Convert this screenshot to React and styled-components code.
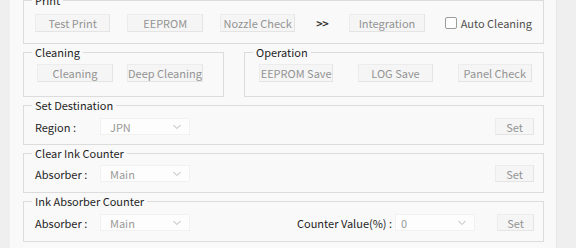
import React from 'react';
import styled, { createGlobalStyle } from 'styled-components';

const Global = createGlobalStyle`
  html, body { margin: 0; padding: 0; background: #efefef; }
  body {
    font-family: "Noto Sans CJK JP", "Liberation Sans", sans-serif;
    font-size: 11px;
    color: #1f1f1f;
  }
`;

const Page = styled.div`
  width: 576px;
  height: 248px;
  overflow: hidden;
  display: flex;
  background: #efefef;
`;

const Panel = styled.div`
  margin-left: 10px;
  width: 547px;
  height: 248px;
  box-sizing: border-box;
  padding: 0 12px 0 13px;
  background: #f9f9f9;
  border-right: 1px solid #e6e6e6;
  display: flex;
  flex-direction: column;
  gap: 2px;
`;

const Group = styled.fieldset`
  margin: ${p => (p.$first ? '-6px 0 0' : '0')};
  padding: ${p => p.$pt}px 11px ${p => p.$pb}px;
  border: 1px solid #dcdcdc;
  min-width: 0;
  flex: ${p => p.$flex || 'none'};
  width: ${p => (p.$w ? `${p.$w}px` : 'auto')};
  box-sizing: border-box;
`;

const Legend = styled.legend`
  font-size: 11px;
  line-height: 12px;
  padding: 0 3px;
  margin-left: -3px;
  color: #1f1f1f;
`;

const Split = styled.div`
  display: flex;
  gap: 20px;
`;

const Row = styled.div`
  display: flex;
  align-items: center;
  height: ${p => p.$h || 18}px;
  gap: ${p => p.$gap || 0}px;
  padding-left: ${p => p.$pl || 0}px;
`;

const Button = styled.div`
  width: ${p => p.$w || 76}px;
  height: ${p => p.$h || 18}px;
  box-sizing: border-box;
  display: flex;
  align-items: center;
  justify-content: center;
  background: #f5f5f5;
  border: 1px solid #ececec;
  border-right-color: #e4e4e4;
  border-bottom-color: #e4e4e4;
  color: #939393;
  font-size: 11px;
  white-space: nowrap;
  margin-left: ${p => (p.$push ? 'auto' : '0')};
  margin-right: ${p => p.$mr || 0}px;
`;

const Arrow = styled.div`
  width: 20px;
  text-align: center;
  color: #333;
  font-size: 11px;
  font-weight: 600;
  letter-spacing: -0.5px;
`;

const CheckWrap = styled.label`
  display: flex;
  align-items: center;
  gap: 4px;
  margin-left: 3px;
  color: #505050;
  white-space: nowrap;
`;

const Box = styled.span`
  width: 12px;
  height: 12px;
  box-sizing: border-box;
  border: 1px solid #9c9c9c;
  border-radius: 2px;
  background: #fdfdfd;
`;

const Label = styled.div`
  width: ${p => (p.$w ? `${p.$w}px` : 'auto')};
  margin-left: ${p => p.$ml || 0}px;
  margin-right: ${p => p.$mr || 0}px;
  color: #1f1f1f;
  white-space: nowrap;
`;

const Select = styled.div`
  width: ${p => p.$w || 90}px;
  height: 17px;
  box-sizing: border-box;
  display: flex;
  align-items: center;
  justify-content: space-between;
  padding: 0 8px 0 ${p => p.$pl || 9}px;
  background: #fdfdfd;
  border: 1px solid #f1f1f1;
  color: #9a9a9a;
`;

const Chevron = () => (
  <svg width="8" height="6" viewBox="0 0 8 6">
    <polyline points="0.5,1 4,4.5 7.5,1" fill="none" stroke="#b5b5b5" strokeWidth="1" />
  </svg>
);

export default function App() {
  return (
    <Page>
      <Global />
      <Panel>
        <Group $first $pt={8} $pb={11}>
          <Legend>Print</Legend>
          <Row $gap={17}>
            <Button>Test Print</Button>
            <Button>EEPROM</Button>
            <Button>Nozzle Check</Button>
            <Arrow>&gt;&gt;</Arrow>
            <Button>Integration</Button>
            <CheckWrap>
              <Box />
              Auto Cleaning
            </CheckWrap>
          </Row>
        </Group>

        <Split>
          <Group $w={201} $pt={6} $pb={14}>
            <Legend>Cleaning</Legend>
            <Row $gap={14} $pl={2}>
              <Button>Cleaning</Button>
              <Button>Deep Cleaning</Button>
            </Row>
          </Group>
          <Group $flex="1" $pt={6} $pb={14}>
            <Legend>Operation</Legend>
            <Row $gap={25} $pl={3}>
              <Button>EEPROM Save</Button>
              <Button>LOG Save</Button>
              <Button>Panel Check</Button>
            </Row>
          </Group>
        </Split>

        <Group $pt={7} $pb={9}>
          <Legend>Set Destination</Legend>
          <Row $h={17}>
            <Label $w={65}>Region :</Label>
            <Select>
              JPN
              <Chevron />
            </Select>
            <Button $w={39} $h={17} $push $mr={-2}>Set</Button>
          </Row>
        </Group>

        <Group $pt={6} $pb={10}>
          <Legend>Clear Ink Counter</Legend>
          <Row $h={17}>
            <Label $w={65}>Absorber :</Label>
            <Select>
              Main
              <Chevron />
            </Select>
            <Button $w={39} $h={17} $push $mr={-2}>Set</Button>
          </Row>
        </Group>

        <Group $pt={7} $pb={10}>
          <Legend>Ink Absorber Counter</Legend>
          <Row $h={17}>
            <Label $w={65}>Absorber :</Label>
            <Select>
              Main
              <Chevron />
            </Select>
            <Label $ml={107} $mr={3}>Counter Value(%) :</Label>
            <Select $w={80} $pl={5}>
              0
              <Chevron />
            </Select>
            <Button $w={37} $h={17} $push $mr={-2}>Set</Button>
          </Row>
        </Group>
      </Panel>
    </Page>
  );
}
